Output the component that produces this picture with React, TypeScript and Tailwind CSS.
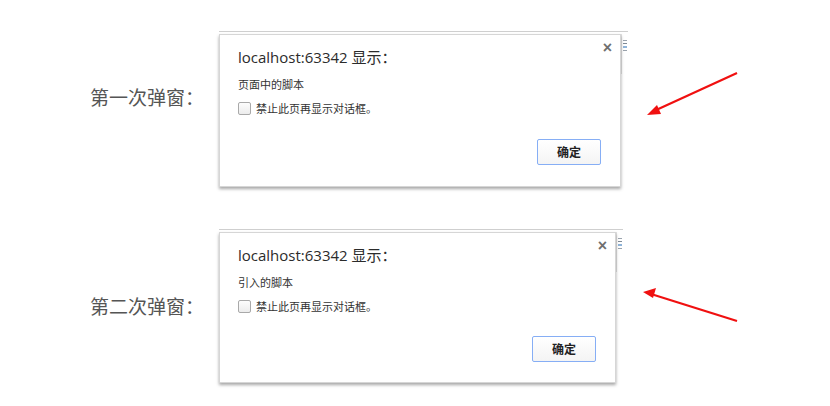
import React from 'react';

const cjk = '"Noto Sans CJK SC", "Noto Sans", sans-serif';
const latin = '"Open Sans", "Noto Sans CJK SC", sans-serif';

type DialogProps = {
  message: string;
  width: string;
  buttonGap: string;
  bottomPad: string;
};

// Chrome-style alert box
function AlertBox({ message, width, buttonGap, bottomPad }: DialogProps) {
  return (
    <div
      className={`relative ${width} ${bottomPad} bg-white border border-[#d6d6d6] shadow-[0_2px_3px_rgba(0,0,0,0.35)] pl-[18px] pr-[19px] pt-[12px]`}
    >
      <button
        className="absolute right-[8px] top-[5px] text-[16px] font-bold leading-none text-[#6f6f6f]"
        style={{ fontFamily: '"Liberation Sans", sans-serif' }}
      >
        ×
      </button>
      <div className="text-[15px] leading-[20px] text-[#2b2b2b]" style={{ fontFamily: latin }}>
        localhost:63342 显示：
      </div>
      <div className="mt-[10px] text-[11px] leading-[14px] text-[#333]" style={{ fontFamily: cjk }}>
        {message}
      </div>
      <label className="mt-[11px] flex items-center gap-[5px]">
        <span className="h-[13px] w-[13px] rounded-[2px] border border-[#a9a9a9] bg-gradient-to-b from-[#fdfdfd] to-[#ececec]" />
        <span className="text-[11px] leading-[13px] text-[#333]" style={{ fontFamily: cjk }}>
          禁止此页再显示对话框。
        </span>
      </label>
      <div className={`flex justify-end ${buttonGap}`}>
        <button
          className="h-[26px] w-[64px] rounded-[2px] border border-[#86aef5] bg-gradient-to-b from-white to-[#f4f4f4] text-[12px] font-bold text-[#222]"
          style={{ fontFamily: cjk }}
        >
          确定
        </button>
      </div>
    </div>
  );
}

// bit of the page peeking out behind the dialog
function PageEdge() {
  return (
    <div className="flex w-[7px] flex-col items-start gap-[2px] pt-[6px] pl-[1px] border-l border-[#e2e2e2] h-[40px]">
      <div className="h-[1px] w-[4px] bg-[#9aa3ad]" />
      <div className="h-[1px] w-[4px] bg-[#7f8a96]" />
      <div className="h-[2px] w-[4px] bg-[#8fb4d9]" />
      <div className="h-[1px] w-[4px] bg-[#9aa3ad]" />
    </div>
  );
}

export default function App() {
  return (
    <div className="h-[406px] w-[830px] bg-white overflow-hidden">
      {/* first row */}
      <div className="flex h-[203px] items-start">
        <div
          className="ml-[90px] mt-[85px] w-[129px] text-[19px] leading-[23px] text-[#555]"
          style={{ fontFamily: cjk }}
        >
          第一次弹窗：
        </div>
        <div className="mt-[31px] flex border-t border-[#cfcfcf] pt-[2px]">
          <AlertBox message="页面中的脚本" width="w-[402px]" buttonGap="mt-[24px]" bottomPad="pb-[21px]" />
          <PageEdge />
        </div>
        <svg className="ml-[2px] mt-[60px]" width="120" height="70" viewBox="0 0 120 70">
          <line x1="107" y1="13" x2="24" y2="51" stroke="#f01010" strokeWidth="2.2" />
          <polygon points="17,55 27,45 31,54" fill="#f01010" />
        </svg>
      </div>

      {/* second row */}
      <div className="flex h-[203px] items-start">
        <div
          className="ml-[90px] mt-[91px] w-[129px] text-[19px] leading-[23px] text-[#555]"
          style={{ fontFamily: cjk }}
        >
          第二次弹窗：
        </div>
        <div className="mt-[26px] flex border-t border-[#cfcfcf] pt-[2px]">
          <AlertBox message="引入的脚本" width="w-[397px]" buttonGap="mt-[23px]" bottomPad="pb-[20px]" />
          <PageEdge />
        </div>
        <svg className="ml-[14px] mt-[67px]" width="120" height="70" viewBox="0 0 120 70">
          <line x1="100" y1="51" x2="14" y2="24" stroke="#f01010" strokeWidth="2.2" />
          <polygon points="6,22 19,18 16,28" fill="#f01010" />
        </svg>
      </div>
    </div>
  );
}
